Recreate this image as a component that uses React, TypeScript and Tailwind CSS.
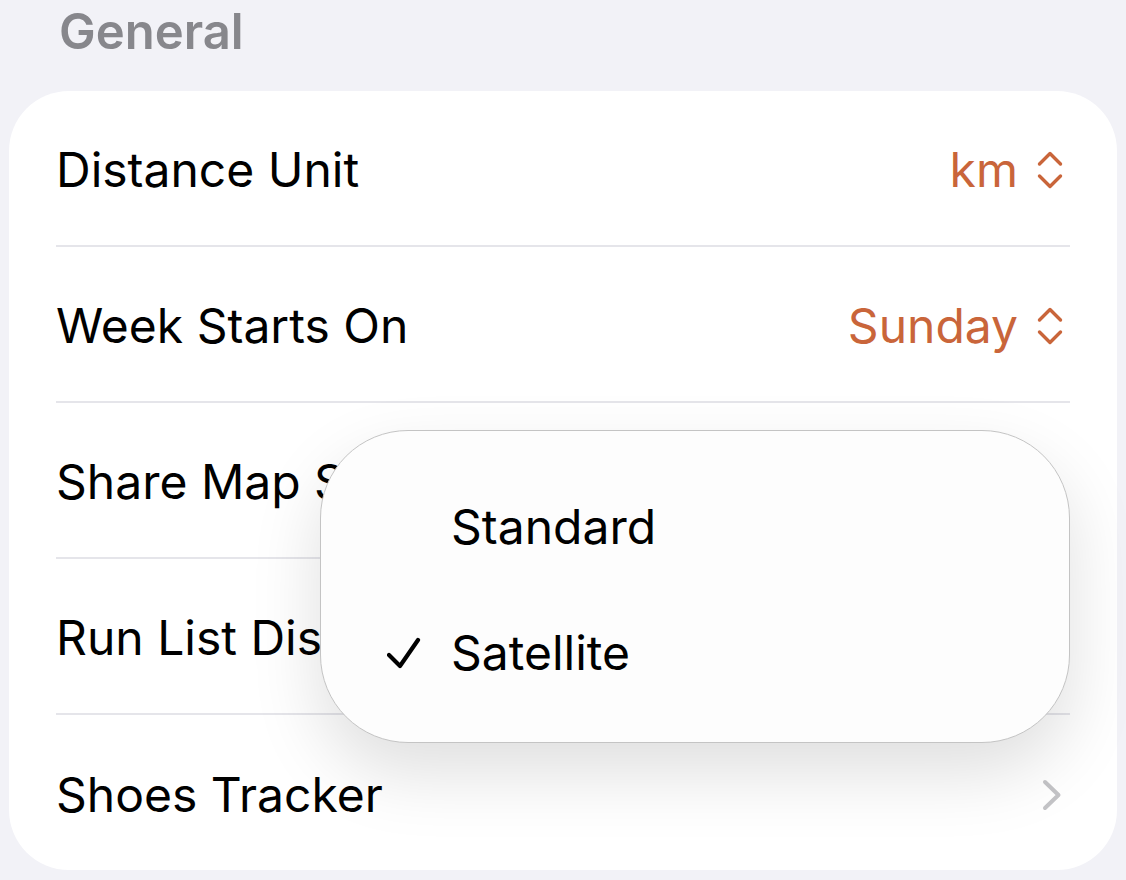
import React from 'react'

type Row = {
    label: string
    value?: string
    kind: 'select' | 'link' | 'hidden'
}

// rows 3 and 4 sit under the open menu, so their values are left out
const rows: Row[] = [
    { label: 'Distance Unit', value: 'km', kind: 'select' },
    { label: 'Week Starts On', value: 'Sunday', kind: 'select' },
    { label: 'Share Map Style', kind: 'hidden' },
    { label: 'Run List Display', kind: 'hidden' },
    { label: 'Shoes Tracker', kind: 'link' },
]

function UpDown() {
    return (
        <svg width="26" height="38" viewBox="0 0 26 38" fill="none" stroke="currentColor" strokeWidth="3.4" strokeLinecap="round" strokeLinejoin="round">
            <polyline points="2.5,13 13,2.5 23.5,13" />
            <polyline points="2.5,25 13,35.5 23.5,25" />
        </svg>
    )
}

function ChevronRight() {
    return (
        <svg width="20" height="32" viewBox="0 0 20 32" fill="none" stroke="#c4c4c7" strokeWidth="4" strokeLinecap="round" strokeLinejoin="round">
            <polyline points="3,3 16.5,16 3,29" />
        </svg>
    )
}

function Check() {
    return (
        <svg width="34" height="32" viewBox="0 0 34 32" fill="none" stroke="#000" strokeWidth="4.2" strokeLinecap="round" strokeLinejoin="round">
            <polyline points="2,18 13,29 31,3" />
        </svg>
    )
}

export default function App() {
    return (
        <div
            className="relative w-[1126px] h-[880px] overflow-hidden bg-[#f2f2f7]"
            style={{ fontFamily: 'Inter, "Noto Sans", sans-serif' }}
        >
            <div className="h-[91px] pl-[59px] pt-[7px]">
                <h2 className="text-[49px] leading-none font-semibold text-[#87878c]">General</h2>
            </div>

            <div className="mx-[9px] rounded-[60px] bg-white">
                {rows.map((row, i) => (
                    <div key={row.label}>
                        <div className={`flex items-center justify-between pt-[4px] pl-[47px] pr-[54px] ${i === rows.length - 1 ? 'h-[155px]' : 'h-[154px]'}`}>
                            <span className="text-[48px] leading-none text-black">{row.label}</span>
                            {row.kind === 'select' && (
                                <span className="flex items-center gap-[19px] text-[#c9653a]">
                                    <span className="text-[48px] leading-none">{row.value}</span>
                                    <UpDown />
                                </span>
                            )}
                            {row.kind === 'link' && (
                                <span className="pr-[1px]">
                                    <ChevronRight />
                                </span>
                            )}
                        </div>
                        {i < rows.length - 1 && <div className="mx-[47px] h-[2px] bg-[#e5e5ea]" />}
                    </div>
                ))}
            </div>

            {/* map style menu */}
            <div className="absolute left-[320px] top-[430px] w-[750px] h-[313px] rounded-[88px] border border-[#c4c4c4] bg-[#fdfdfd] shadow-[0_30px_70px_rgba(0,0,0,0.13)] pt-[33px] pl-[66px]">
                <div className="flex h-[126px] items-center">
                    <span className="w-[64px]" />
                    <span className="text-[48px] leading-none text-black">Standard</span>
                </div>
                <div className="flex h-[126px] items-center">
                    <span className="w-[64px]">
                        <Check />
                    </span>
                    <span className="text-[48px] leading-none text-black">Satellite</span>
                </div>
            </div>
        </div>
    )
}
